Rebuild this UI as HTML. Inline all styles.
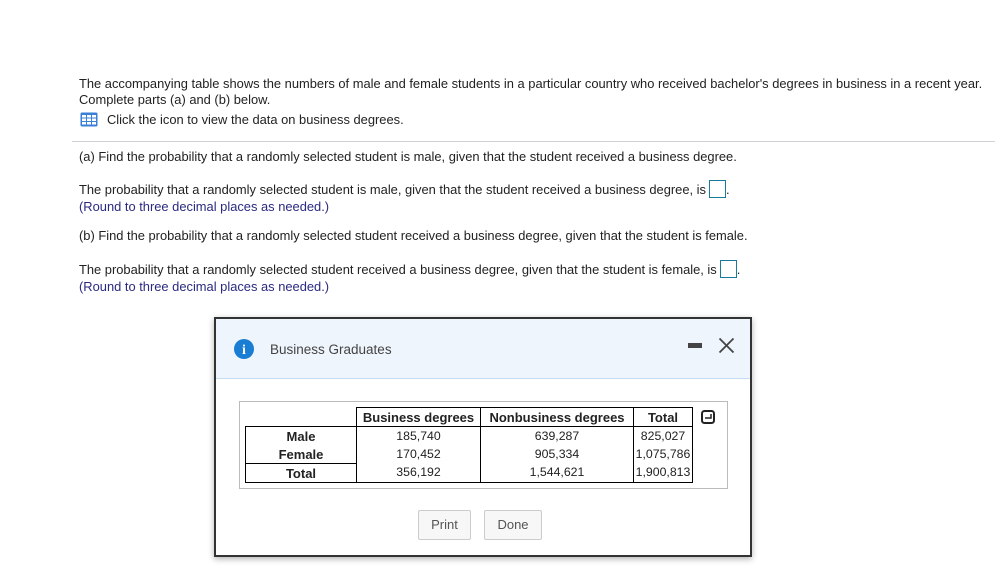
<!DOCTYPE html>
<html><head><style>
body{margin:0;width:995px;height:570px;background:#fff;font-family:"Liberation Sans",Arial,sans-serif;position:relative;overflow:hidden;color:#222}
.t{position:absolute;font-size:12.9px;white-space:nowrap;line-height:15px}
.nv{color:#2a2a80}
.box{display:inline-block;width:15px;height:16px;border:1px solid #1a7a9a;vertical-align:-4px;margin-left:3px}
.dlg{position:absolute;left:214px;top:317px;width:534px;height:236px;border:2px solid #333;background:#fff;box-shadow:0 2px 6px rgba(0,0,0,.3)}
.hdr{position:absolute;left:0;top:0;width:534px;height:59px;background:#eff5fd;border-bottom:1px solid #c5dcf2}
table{border-collapse:collapse;font-size:12.3px;position:absolute;left:29px;top:88px;table-layout:fixed}
td{padding:0;text-align:center;height:18px;line-height:17px;white-space:nowrap}
.h{font-weight:bold;font-size:13px}
.btn{position:absolute;top:191px;height:28px;border:1px solid #ccc;border-radius:2px;background:#f7f7f7;color:#555;font-size:13px;line-height:28px;text-align:center}
</style></head><body>
<div class="t" style="left:79px;top:76px">The accompanying table shows the numbers of male and female students in a particular country who received bachelor's degrees in business in a recent year.</div>
<div class="t" style="left:79px;top:92px">Complete parts (a) and (b) below.</div>
<svg style="position:absolute;left:80px;top:112px" width="18" height="15"><rect x="0.5" y="0.5" width="17" height="14" rx="1.5" fill="#3a7fd8"/><g fill="#fff"><rect x="2" y="3" width="4" height="2.5"/><rect x="7" y="3" width="4" height="2.5"/><rect x="12" y="3" width="4" height="2.5"/><rect x="2" y="6.5" width="4" height="2.5"/><rect x="7" y="6.5" width="4" height="2.5"/><rect x="12" y="6.5" width="4" height="2.5"/><rect x="2" y="10" width="4" height="2.5"/><rect x="7" y="10" width="4" height="2.5"/><rect x="12" y="10" width="4" height="2.5"/></g></svg>
<div class="t" style="left:107px;top:112px">Click the icon to view the data on business degrees.</div>
<div style="position:absolute;left:72px;top:141px;width:923px;height:1px;background:#d0d0d8"></div>
<div class="t" style="left:79px;top:149px">(a) Find the probability that a randomly selected student is male, given that the student received a business degree.</div>
<div class="t" style="left:79px;top:180px">The probability that a randomly selected student is male, given that the student received a business degree, is<span class="box"></span>.</div>
<div class="t nv" style="left:79px;top:199px">(Round to three decimal places as needed.)</div>
<div class="t" style="left:79px;top:228px">(b) Find the probability that a randomly selected student received a business degree, given that the student is female.</div>
<div class="t" style="left:79px;top:260px">The probability that a randomly selected student received a business degree, given that the student is female, is<span class="box"></span>.</div>
<div class="t nv" style="left:79px;top:279px">(Round to three decimal places as needed.)</div>
<div class="dlg">
<div class="hdr">
<svg style="position:absolute;left:18px;top:20px" width="20" height="20"><circle cx="10" cy="10" r="10" fill="#1a7dd4"/><text x="10" y="15" text-anchor="middle" font-family="Liberation Serif,serif" font-weight="bold" font-size="14" fill="#fff">i</text></svg>
<div style="position:absolute;left:54px;top:23px;font-size:13.5px;color:#444">Business Graduates</div>
<div style="position:absolute;left:472px;top:24px;width:14px;height:5px;background:#444"></div>
<svg style="position:absolute;left:502px;top:18px" width="17" height="17"><path d="M1.5 1.5L15.5 15.5M15.5 1.5L1.5 15.5" stroke="#444" stroke-width="1.8"/></svg>
</div>
<div style="position:absolute;left:23px;top:82px;width:487px;height:86px;border:1px solid #bbb"></div>
<table>
<col style="width:111px"><col style="width:124px"><col style="width:153px"><col style="width:59px">
<tr><td></td><td class="h" style="border:1px solid #000">Business degrees</td><td class="h" style="border:1px solid #000">Nonbusiness degrees</td><td class="h" style="border:1px solid #000">Total</td></tr>
<tr><td class="h" style="border-left:1px solid #000;border-top:1px solid #000">Male</td><td style="border-left:1px solid #000;border-right:1px solid #000">185,740</td><td style="border-right:1px solid #000">639,287</td><td style="border-right:1px solid #000">825,027</td></tr>
<tr><td class="h" style="border-left:1px solid #000">Female</td><td style="border-left:1px solid #000;border-right:1px solid #000">170,452</td><td style="border-right:1px solid #000">905,334</td><td style="border-right:1px solid #000">1,075,786</td></tr>
<tr><td class="h" style="border:1px solid #000">Total</td><td style="border:1px solid #000;border-top:none">356,192</td><td style="border:1px solid #000;border-top:none">1,544,621</td><td style="border:1px solid #000;border-top:none">1,900,813</td></tr>
</table>
<svg style="position:absolute;left:485px;top:91px" width="14" height="14"><rect x="1" y="1" width="12" height="12" rx="2.5" fill="none" stroke="#222" stroke-width="2"/><path d="M4 8H10V4" fill="none" stroke="#222" stroke-width="1.5"/></svg>
<div class="btn" style="left:202px;width:51px">Print</div>
<div class="btn" style="left:268px;width:56px">Done</div>
</div>
</body></html>
